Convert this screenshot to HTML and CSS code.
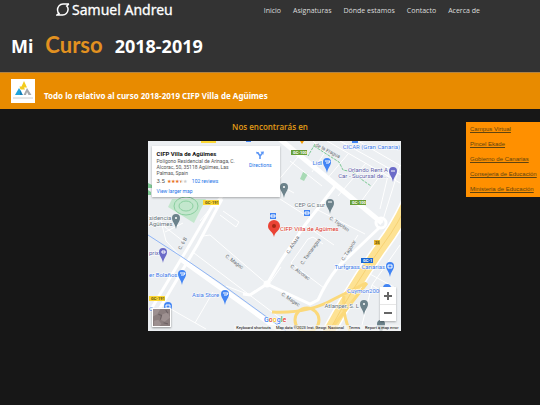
FILE: index.html
```
<!DOCTYPE html>
<html lang="es">

<head>
    <meta charset="UTF-8">
    <meta name="viewport" content="width=device-width, initial-scale=1.0">
    <title>Samuel Andreu - Dónde estamos</title>
    <link rel="stylesheet" href="styles.css">
</head>

<body>
    <header>
        <div class="top-bar">
            <a class="logo" href="#">
                <svg class="logo-icon" viewBox="0 0 14 14">
                    <path d="M13 1H7C3.500 1 1.500 4 1.500 7c0 1.800.8 3.200 2.100 4.200M13 1l-2.300 2C11.800 4 12.300 5.300 12 7c-.4 3-2.500 4.800-5.500 5H1l2.600-1.800" />
                </svg>
                <span>Samuel Andreu</span>
            </a>
            <nav>
                <ul class="menu">
                    <li><a href="#">Inicio</a></li>
                    <li><a href="#">Asignaturas</a></li>
                    <li><a href="#">Dónde estamos</a></li>
                    <li><a href="#">Contacto</a></li>
                    <li><a href="#">Acerca de</a></li>
                </ul>
            </nav>
        </div>
        <h1 class="title">
            <span>Mi</span>
            <span class="title-big">Curso</span>
            <span>2018-2019</span>
        </h1>
    </header>

    <section class="banner">
        <svg class="banner-logo" viewBox="0 0 24 24">
            <rect width="24" height="24" fill="#fff" />
            <path d="M13 2l3 6.500h-3l1 2h-4.500l-1-3h2z" fill="#f3cb1d" />
            <path d="M8 9l2.500 4-1 3H4z" fill="#20a4dc" />
            <path d="M9 11l3 5H9z" fill="#167fb5" />
            <path d="M16 9l4.500 7h-3l-1.500-3-1 3h-2.500z" fill="#a7a9ac" />
            <path d="M2 19h20" stroke="#ccc" />
        </svg>
        <h2>Todo lo relativo al curso 2018-2019 CIFP Villa de Agüimes</h2>
    </section>

    <main>
        <h3>Nos encontrarás en</h3>

        <div class="map">
            <svg class="map-canvas" viewBox="0 0 253 190">
                <defs>
                    <path id="pin" d="M0 7C-1 1-4 0-4-4a4 4 0 0 1 8 0C4 0 1 1 0 7z" />
                </defs>
                <rect width="253" height="190" fill="#eceff2" />

                <!-- parks -->
                <path d="M24 58h34l-12 24-26-16z" fill="#c3e7cd" />
                <g fill="none" stroke="#8bcfa0">
                    <ellipse cx="38" cy="65" rx="12" ry="9" />
                    <ellipse cx="38" cy="65" rx="7" ry="5" />
                </g>
                <path d="M155 31l5 2-4 7-4-2z" fill="#a8dab5" />
                <path d="M0 42l4 2v3H0zM0 49l3 2v3H0z" fill="#81c995" />

                <!-- streets -->
                <g class="street">
                    <path d="M0 74l17 12 18 14M12 76l6 24 16 17M17 91l18-9" />
                    <path d="M41 117l14-22 7-1 57 49M72 74l16 12 3-5-16-11M52 80l10-12" />
                    <path d="M65 151l-18 31M14 163l44 25M102 154l-24-9M133 126l-12 17" />
                    <path d="M143 122l17-24 5-2 10 7M143 122l33 25 34-53M157 84l29 20M170 69l47 24" />
                    <path d="M132 58l25 16M150 16l-22 26 18 10M142 20l18 14 14 11" />
                    <path d="M165 0l12 11-13 20M179 0l73 42M192 0l61 34M210 0l43 25M200 13l-22 26M218 22l-28 33M234 32l-22 30" />
                    <path d="M252 24l-18 58M242 26l-10 42M252 104l-28 40 16 10M220 132l26 14M224 144l-10 40" />
                </g>
                <path class="street wide" d="M188 44l-31 40-25 37-13 22-17 11-7-1" />
                <path class="street wide" d="M119 143l43 20 8-4q8-18 20-33l42-40" />
                <path class="street major" d="M128-5l60 49 46 38" />
                <path class="street wide" d="M66 62L41 105 2 170M74 58L50 103 9 172M82 44l-16 22" />
                <path class="street major" d="M34 119l100 72" />
                <path class="street" d="M46 112l90 68" />
                <circle class="street wide" cx="119" cy="143" r="2" />
                <circle class="street wide" cx="233" cy="82" r="5" />

                <!-- motorway -->
                <path class="edge" d="M262 56q-10 25-28 49-28 39-55 89" />
                <path class="highway" d="M262 56q-10 25-28 49-28 39-55 89" />
                <path class="ramp" d="M124 171q36 2 62-13l32-16M196 155q-2 18 6 35M186 184l33-42" />
                <circle class="ramp" cx="159" cy="179" r="12" />
                <path d="M262 56q-10 25-28 49-28 39-55 89" fill="none" stroke="#f7d273" />
                <path d="M0 94l34 22 38 26 66 48" fill="none" stroke="#8fb5f5" />

                <!-- green footpath -->
                <path d="M167 3l-7 12M166 5l14 9 11 7 4 8 10 2 8 7 10 7" fill="none" stroke="#7cc894" stroke-dasharray="3 1" />

                <!-- road numbers -->
                <g class="shield">
                    <rect x="53" y="-1" width="15" height="3" fill="#fdd835" />
                    <rect x="55" y="59" width="16" height="5" fill="#fdd835" />
                    <text x="57" y="63">GC-191</text>
                    <rect x="1" y="155" width="16" height="5" fill="#fdd835" />
                    <text x="3" y="159">GC-191</text>
                    <rect x="143" y="9" width="16" height="5" fill="#689f38" />
                    <text class="light" x="145" y="13">GC-100</text>
                    <rect x="202" y="59" width="16" height="5" fill="#689f38" />
                    <text class="light" x="204" y="63">GC-100</text>
                    <rect x="213" y="117" width="12" height="5" fill="#1967d2" />
                    <text class="light" x="215" y="121">GC-1</text>
                    <rect x="226" y="99" width="6" height="5" fill="#e6b52c" />
                    <text x="227" y="103">25</text>
                </g>

                <!-- street names -->
                <g class="street-name">
                    <text transform="translate(167 5) rotate(27)">de la Fragua</text>
                    <text transform="translate(33 109) rotate(-62)">C. 6 B</text>
                    <text transform="translate(77 116) rotate(36)">C. Magec</text>
                    <text transform="translate(133 154) rotate(34)">C. Magec</text>
                    <text transform="translate(181 78) rotate(34)">C. Tigotan</text>
                    <text transform="translate(141 113) rotate(-58)">C. Añaza</text>
                    <text transform="translate(155 124) rotate(-55)">C. Tamaragua</text>
                    <text transform="translate(142 126) rotate(36)">C. Alcorac</text>
                    <text transform="translate(196 120) rotate(-58)">C. Tagoror</text>
                </g>

                <!-- places -->
                <g class="place">
                    <text x="252" y="8" text-anchor="end">CICAR (Gran Canaria)</text>
                    <text x="174" y="24" text-anchor="end">Lidl</text>
                    <text x="1" y="136">er Bolaños</text>
                    <text x="44" y="156">Asia Store</text>
                    <text x="1" y="170">Com</text>
                    <text x="237" y="128" text-anchor="end">Turfgrass Canarias</text>
                    <text x="199" y="152">Cuymon2000</text>
                </g>
                <g class="place purple">
                    <text x="240" y="31" text-anchor="end">Orlando Rent A</text>
                    <text x="240" y="37" text-anchor="end">Car - Sucursal de...</text>
                    <text x="1" y="114">prix</text>
                </g>
                <g class="place grey">
                    <text x="177" y="66" text-anchor="end">CEP GC sur</text>
                    <text x="1" y="79">sidencia</text>
                    <text x="1" y="85">Agüimes</text>
                    <text x="211" y="167" text-anchor="end">Atlanper, S. L</text>
                </g>
                <g fill="#4285f4">
                    <use href="#pin" x="179" y="25" />
                    <use href="#pin" x="34" y="137" />
                    <use href="#pin" x="77" y="157" />
                    <use href="#pin" x="20" y="169" />
                    <use href="#pin" x="242" y="129" />
                    <use href="#pin" x="239" y="151" />
                    <path d="M122 72h6v6h-6zM156 69h6v6h-6zM204-2h6v4h-6zM98-2h5v3h-5z" />
                </g>
                <path d="M152 0h4l-2 3z" fill="#f29900" />
                <g fill="#6b6bc8">
                    <use href="#pin" x="245" y="34" />
                    <use href="#pin" x="15" y="115" />
                </g>
                <g fill="#6c828b">
                    <use href="#pin" x="28" y="81" />
                    <use href="#pin" x="136" y="50" />
                    <use href="#pin" x="182" y="66" />
                    <use href="#pin" x="216" y="167" />
                    <use href="#pin" x="233" y="187" />
                </g>
                <g fill="none" stroke="#fff">
                    <path d="M177 20h5l-1 2h-3M32 132h5l-1 2h-3M75 152h5l-1 2h-3M18 164h4v3h-4zM240 124h4v3h-4zM243 30h4M14 110h3v2h-3zM123 74h4v2h-4zM157 71h4v2h-4zM180 61h4" />
                </g>
                <g fill="#fff">
                    <circle cx="28" cy="77" r="1" />
                    <circle cx="136" cy="46" r="1" />
                    <circle cx="216" cy="163" r="1" />
                </g>
                <path d="M126 96c-1-6-6-6-6-11a6 6 0 0 1 12 0c0 5-5 5-6 11z" fill="#ea4335" />
                <circle cx="126" cy="85" r="2" fill="#a52714" />
                <text class="place red" x="132" y="90">CIFP Villa de Agüimes</text>
                <text class="google" x="116" y="181"><tspan fill="#4285f4">G</tspan><tspan fill="#ea4335">o</tspan><tspan fill="#fbbc04">o</tspan><tspan fill="#4285f4">g</tspan><tspan fill="#34a853">l</tspan><tspan fill="#ea4335">e</tspan></text>
            </svg>

            <div class="card">
                <div class="card-info">
                    <strong>CIFP Villa de Agüimes</strong>
                    <p>Polígono Residencial de Arinaga, C. Alcorac, 50, 35118 Agüimes, Las Palmas, Spain</p>
                    <div class="rating">
                        <span class="score">3.5</span>
                        <span class="stars">★★★<span class="half">★</span><span class="off">★</span></span>
                        <a href="#">102 reviews</a>
                    </div>
                    <a href="#">View larger map</a>
                </div>
                <a class="directions" href="#">
                    <svg viewBox="0 0 10 10">
                        <path d="M5 10V6L2 2M5 6.500L7.500 3" fill="none" stroke="#5a95f5" stroke-width="2" />
                        <path d="M5.500 1L10 .5 9 5zM0 1l3.500.5L1 4z" fill="#5a95f5" />
                    </svg>
                    Directions
                </a>
            </div>

            <div class="zoom">
                <button type="button" aria-label="Zoom in"><svg viewBox="0 0 10 10"><path d="M1 5h8M5 1v8" /></svg></button>
                <button type="button" aria-label="Zoom out"><svg viewBox="0 0 10 10"><path d="M1 5h8" /></svg></button>
            </div>

            <button type="button" class="satellite" aria-label="Show satellite imagery">
                <svg viewBox="0 0 16 16">
                    <rect width="16" height="16" fill="#8a7d7d" />
                    <path d="M0 0h7L4 5 0 7zM9 5l5-2 2 5-5 4-4-2zM1 11l4-1 3 4-2 2H1z" fill="#9d9090" />
                    <path d="M5 5l3 1-1 4M12 1l2 3M10 13l4 1" stroke="#6c6163" fill="none" />
                </svg>
            </button>

            <div class="map-legal">
                <button type="button">Keyboard shortcuts</button>
                <span>Map data ©2023 Inst. Geogr. Nacional</span>
                <a href="#">Terms</a>
                <a href="#">Report a map error</a>
            </div>
        </div>

        <aside>
            <ul class="links">
                <li><a href="#">Campus Virtual</a></li>
                <li><a href="#">Pincel Ekade</a></li>
                <li><a href="#">Gobierno de Canarias</a></li>
                <li><a href="#">Consejeria de Educación</a></li>
                <li><a href="#">Ministeria de Educación</a></li>
            </ul>
        </aside>
    </main>
</body>

</html>
```
FILE: styles.css
```
* {
    box-sizing: border-box;
}

body {
    margin: 0;
    background: #171717;
    font-family: 'Open Sans', sans-serif;
}

h1, h2, h3, p, ul {
    margin: 0;
    padding: 0;
}

ul {
    list-style: none;
}

a {
    text-decoration: none;
}

button {
    border: 0;
    padding: 0;
    font-family: inherit;
}

header {
    background: #333;
    padding-bottom: 12px;
}

.top-bar {
    display: flex;
    justify-content: space-between;
    align-items: center;
    padding: 0 60px 0 56px;
    height: 20px;
}

.logo {
    display: flex;
    align-items: center;
    gap: 2px;
    color: #fff;
    font-family: 'Noto Sans', sans-serif;
    font-size: 14px;
    line-height: 20px;
    -webkit-text-stroke: 0.3px #fff;
}

.logo-icon {
    width: 14px;
    height: 14px;
    fill: none;
    stroke: #fff;
    stroke-width: 1.5;
}

.menu {
    display: flex;
    gap: 12px;
    font-size: 7px;
    line-height: 20px;
    padding-top: 2px;
}

.menu a {
    color: #ddd;
}

.title {
    display: flex;
    align-items: baseline;
    gap: 12px;
    padding: 11px 11px 0;
    font-family: 'Noto Sans', sans-serif;
    font-size: 18px;
    line-height: 28px;
    color: #fff;
}

.title-big {
    font-family: Lato, sans-serif;
    font-size: 22px;
    color: #e29120;
}

.banner {
    display: flex;
    align-items: center;
    gap: 9px;
    height: 37px;
    padding: 0 11px;
    background: #e88b00;
    border-top: 1px solid #b18344;
}

.banner-logo {
    width: 24px;
    height: 24px;
}

.banner h2 {
    padding-top: 10px;
    font-family: 'Noto Sans', sans-serif;
    font-size: 8px;
    line-height: 12px;
    color: #fff;
}

main {
    display: grid;
    grid-template-columns: 1fr 253px 1fr;
    padding: 13px 0 72px 8px;
}

main h3 {
    grid-area: 1 / 2;
    padding-bottom: 9px;
    margin-left: -8px;
    text-align: center;
    font-size: 8px;
    line-height: 10px;
    font-weight: 600;
    color: #e29b16;
}

.map {
    grid-area: 2 / 2;
    position: relative;
    font-family: Roboto, sans-serif;
}

.map-canvas {
    display: block;
    width: 100%;
}

.street {
    fill: none;
    stroke: #fff;
    stroke-width: 1;
}

.wide {
    stroke-width: 3;
}

.major {
    stroke-width: 5;
}

.edge {
    fill: none;
    stroke: #fff;
    stroke-width: 14;
}

.highway {
    fill: none;
    stroke: #fde293;
    stroke-width: 11;
}

.ramp {
    fill: none;
    stroke: #fbd97b;
    stroke-width: 3;
}

.shield {
    font-size: 4px;
    font-weight: bold;
    fill: #5f5310;
}

.light {
    fill: #fff;
}

.street-name {
    font-size: 5px;
    fill: #666b70;
}

.place {
    font-size: 6px;
    fill: #3b78e7;
    stroke: #fff;
    stroke-width: 1;
    paint-order: stroke;
}

.purple {
    fill: #5c5ca8;
}

.grey {
    fill: #5f7078;
}

.red {
    fill: #d93025;
}

.google {
    font-size: 7px;
    font-weight: 500;
    stroke: #fff;
    stroke-width: 1;
    paint-order: stroke;
}

.card {
    position: absolute;
    top: 5px;
    left: 4px;
    display: flex;
    justify-content: space-between;
    width: 128px;
    padding: 3px 8px 3px 5px;
    background: #fff;
    box-shadow: 0 1px 2px rgba(0, 0, 0, 0.3);
    font-size: 5px;
    line-height: 6px;
    color: #555;
}

.card strong {
    display: block;
    font-size: 6px;
    line-height: 9px;
    color: #111;
}

.card p {
    width: 84px;
}

.card a {
    color: #1a73e8;
}

.rating {
    display: flex;
    gap: 2px;
    line-height: 10px;
    margin-bottom: 2px;
}

.rating a {
    margin-left: 3px;
}

.score {
    font-size: 6px;
}

.stars {
    color: #e7711b;
}

.half {
    background: linear-gradient(90deg, #e7711b 50%, #ccc 50%);
    background-clip: text;
    color: transparent;
}

.off {
    color: #ccc;
}

.directions {
    display: flex;
    flex-direction: column;
    align-items: center;
    gap: 3px;
    padding-top: 2px;
}

.directions svg {
    width: 8px;
    height: 8px;
}

.zoom {
    position: absolute;
    right: 5px;
    bottom: 10px;
    display: grid;
    background: #fff;
    box-shadow: 0 1px 2px rgba(0, 0, 0, 0.3);
}

.zoom button {
    display: flex;
    align-items: center;
    justify-content: center;
    width: 16px;
    height: 17px;
    background: none;
}

.zoom button + button {
    border-top: 1px solid #e6e6e6;
}

.zoom svg {
    width: 10px;
    height: 10px;
    stroke: #666;
    stroke-width: 2;
}

.satellite {
    position: absolute;
    left: 4px;
    bottom: 4px;
    width: 19px;
    height: 19px;
    border: 1px solid #fff;
    box-shadow: 0 1px 2px rgba(0, 0, 0, 0.4);
}

.satellite svg {
    display: block;
    width: 100%;
}

.map-legal {
    position: absolute;
    right: 0;
    bottom: 0;
    display: flex;
    gap: 5px;
    padding: 0 2px;
    background: rgba(245, 245, 245, 0.7);
    font-size: 4px;
    line-height: 6px;
    color: #000;
    white-space: nowrap;
}

.map-legal button {
    background: none;
    font-size: 4px;
    line-height: 6px;
}

.map-legal a {
    color: #000;
}

aside {
    grid-area: 1 / 3 / 3 / 4;
    justify-self: end;
    align-self: start;
    width: 74px;
    background: #ff9000;
}

.links {
    padding: 0 4px;
    font-family: 'Liberation Sans', sans-serif;
    font-size: 6px;
    line-height: 15px;
    white-space: nowrap;
}

.links a {
    color: #5e4410;
    text-decoration: underline;
}
```
